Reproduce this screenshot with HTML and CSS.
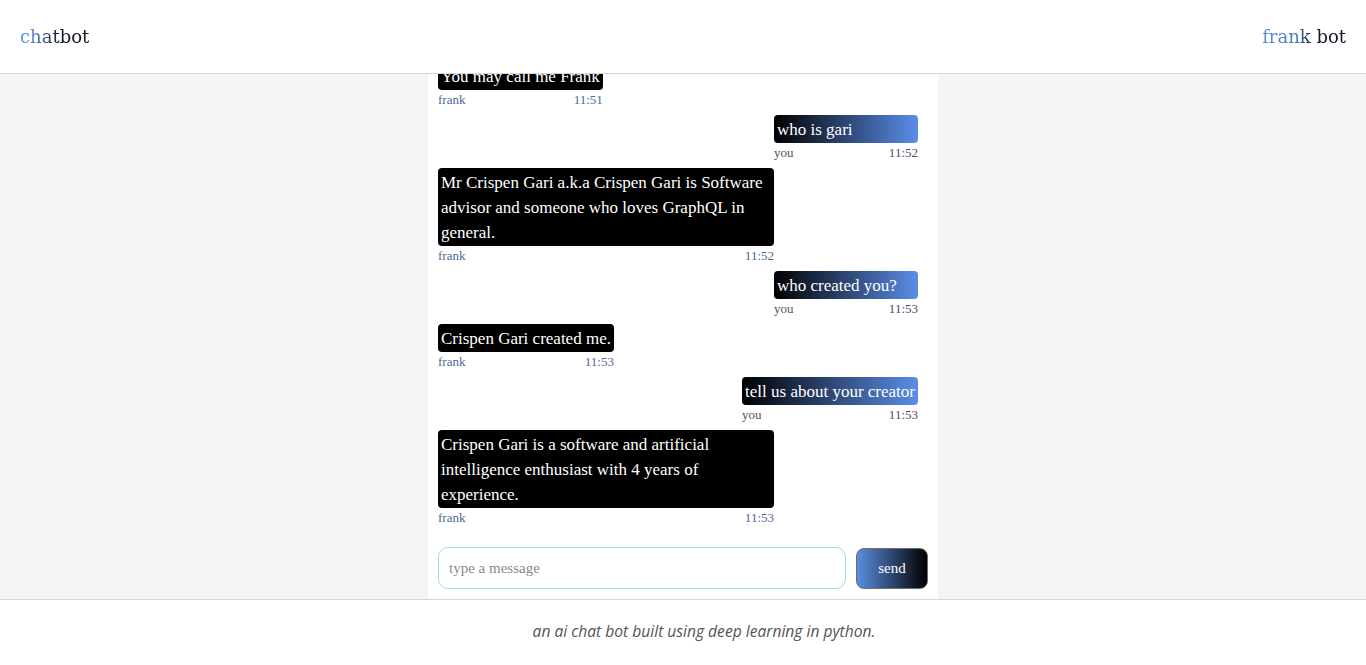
FILE: index.html
```html
<!DOCTYPE html>
<html>
<head>
<meta charset="utf-8">
<link rel="stylesheet" href="styles.css">
</head>
<body>
<header class="topbar">
  <div class="brand brand-left">chatbot</div>
  <div class="brand brand-right">frank bot</div>
</header>
<main class="main">
  <section class="chat">
    <div class="messages">
      <div class="msg bot">
        <div class="bubble">You may call me Frank</div>
        <div class="meta"><span>frank</span><span>11:51</span></div>
      </div>
      <div class="msg user">
        <div class="bubble">who is gari</div>
        <div class="meta"><span>you</span><span>11:52</span></div>
      </div>
      <div class="msg bot">
        <div class="bubble">Mr Crispen Gari a.k.a Crispen Gari is Software advisor and someone who loves GraphQL in general.</div>
        <div class="meta"><span>frank</span><span>11:52</span></div>
      </div>
      <div class="msg user">
        <div class="bubble">who created you?</div>
        <div class="meta"><span>you</span><span>11:53</span></div>
      </div>
      <div class="msg bot">
        <div class="bubble">Crispen Gari created me.</div>
        <div class="meta"><span>frank</span><span>11:53</span></div>
      </div>
      <div class="msg user">
        <div class="bubble">tell us about your creator</div>
        <div class="meta"><span>you</span><span>11:53</span></div>
      </div>
      <div class="msg bot">
        <div class="bubble">Crispen Gari is a software and artificial intelligence enthusiast with 4 years of experience.</div>
        <div class="meta"><span>frank</span><span>11:53</span></div>
      </div>
    </div>
    <form class="composer">
      <input class="input" type="text" placeholder="type a message">
      <button class="send" type="button">send</button>
    </form>
  </section>
</main>
<footer class="footer">
  <p>an ai chat bot built using deep learning in python.</p>
</footer>
</body>
</html>
```
FILE: styles.css
```css
* { box-sizing: border-box; }
html, body { margin: 0; padding: 0; height: 100%; }
body {
  font-family: "Liberation Serif", "DejaVu Serif", serif;
  background: #f4f4f4;
  display: flex;
  flex-direction: column;
  height: 665px;
  overflow: hidden;
}
.topbar {
  height: 74px;
  flex: none;
  background: #fff;
  border-bottom: 1px solid #d6d6d6;
  display: flex;
  align-items: center;
  justify-content: space-between;
  padding: 0 20px;
}
.brand {
  font-family: "DejaVu Serif", serif;
  font-size: 18px;
  -webkit-background-clip: text;
  background-clip: text;
  color: transparent;
}
.brand-left { background-image: linear-gradient(to right, #5b8de0 0%, #5b8de0 15%, #151a2a 55%); }
.brand-right { background-image: linear-gradient(to right, #5b8de0 0%, #4f78c4 40%, #151a2a 62%); }
.main {
  flex: 1;
  display: flex;
  justify-content: center;
  min-height: 0;
}
.chat {
  width: 510px;
  background: #fff;
  display: flex;
  flex-direction: column;
  min-height: 0;
}
.messages {
  flex: 1;
  min-height: 0;
  overflow: hidden;
  display: flex;
  flex-direction: column;
  justify-content: flex-end;
  padding: 0 20px 11px 10px;
  gap: 7px;
}
.msg {
  display: flex;
  flex-direction: column;
  max-width: 70%;
  min-width: 30%;
  flex: none;
}
.msg.bot { align-self: flex-start; }
.msg.user { align-self: flex-end; }
.bubble {
  font-size: 17px;
  line-height: 25px;
  color: #fff;
  padding: 2px 3px 1px;
  border-radius: 4px;
}
.bot .bubble { background: #000; }
.user .bubble { background: linear-gradient(to right, #000 0%, #5b8de8 100%); }
.meta {
  display: flex;
  justify-content: space-between;
  font-size: 13px;
  line-height: 16px;
  padding-top: 2px;
}
.bot .meta { color: #4a6a96; }
.user .meta { color: #5a4a68; }
.composer {
  flex: none;
  display: flex;
  align-items: center;
  gap: 10px;
  padding: 10px;
}
.input {
  flex: 1;
  height: 42px;
  border: 1px solid #a9d8e6;
  border-radius: 10px;
  padding: 0 10px;
  font-family: "Liberation Serif", serif;
  font-size: 15px;
  color: #333;
  outline: none;
}
.input::placeholder { color: #8a8a8a; }
.send {
  width: 72px;
  height: 41px;
  border: 1px solid #6d6d6d;
  border-radius: 8px;
  background: linear-gradient(to right, #5b8de0 0%, #000 100%);
  color: #fff;
  font-family: "Liberation Serif", serif;
  font-size: 15px;
}
.footer {
  flex: none;
  height: 66px;
  background: #fff;
  border-top: 1px solid #d6d6d6;
  display: flex;
  align-items: center;
  justify-content: center;
  padding-left: 42px;
  padding-bottom: 4px;
}
.footer p {
  margin: 0;
  font-family: "Open Sans", "Noto Sans", sans-serif;
  font-style: italic;
  font-size: 15.6px;
  color: #555;
}
```
